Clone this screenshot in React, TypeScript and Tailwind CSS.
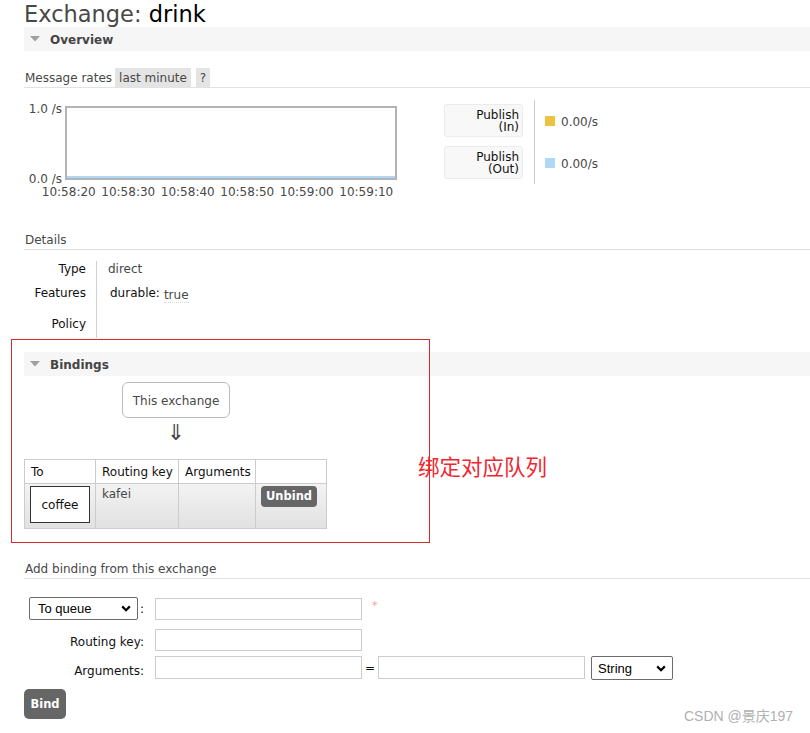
import React from "react";

function Tri() {
  return (
    <svg width="10" height="6" viewBox="0 0 10 6">
      <path d="M0 0H10L5 5.5Z" fill="#a0a0a0" />
    </svg>
  );
}

function SectionBar({ title, className = "" }: { title: string; className?: string }) {
  return (
    <div className={"h-[24px] bg-[#f6f6f6] flex items-center pl-[6px] " + className}>
      <Tri />
      <span className="ml-[10px] mt-[2px] font-bold text-[#444] leading-[14px]">{title}</span>
    </div>
  );
}

function Chevron() {
  return (
    <svg width="10" height="7" viewBox="0 0 10 7">
      <path d="M1.2 1.4L5 5.2L8.8 1.4" fill="none" stroke="#000" strokeWidth="2.2" />
    </svg>
  );
}

function LegendBox({ a, b }: { a: string; b: string }) {
  return (
    <div className="w-[79px] h-[33px] bg-[#f8f8f8] border border-[#ececec] rounded-[3px] flex flex-col justify-center items-end pr-[3px] pt-[1px] leading-[12px] text-[#111]">
      <span>{a}</span>
      <span>{b}</span>
    </div>
  );
}

const times = ["10:58:20", "10:58:30", "10:58:40", "10:58:50", "10:59:00", "10:59:10"];

export default function App() {
  return (
    <div className="relative w-[810px] h-[733px] overflow-hidden bg-white font-['DejaVu_Sans',Verdana,sans-serif] text-[12px] text-[#484848]">
      <div className="pl-[24px]">
        <h1 className="h-[27px] text-[22.5px] leading-[28px] text-[#484848] whitespace-nowrap font-normal">
          Exchange: <span className="text-black">drink</span>
        </h1>
        <SectionBar title="Overview" />

        <div className="mt-[17px] h-[20px] border-b border-[#e2e2e2] flex items-start">
          <span className="leading-[21px] pl-[1px] mr-[3px]">Message rates</span>
          <span className="h-[19px] leading-[21px] px-[4px] bg-[#e4e4e4]">last minute</span>
          <span className="ml-[5px] h-[19px] leading-[21px] px-[4px] bg-[#e4e4e4]">?</span>
        </div>

        <div className="mt-[10px] flex items-start">
          <div className="relative w-[376px] h-[105px]">
            <span className="absolute left-0 top-[4px] w-[38px] text-right leading-[14px]">1.0 /s</span>
            <span className="absolute left-0 top-[74px] w-[38px] text-right leading-[14px]">0.0 /s</span>
            <div className="absolute left-[41px] top-[8px] w-[332px] h-[74px] border-2 border-[#b4b4b4] bg-white">
              <div className="absolute left-0 right-0 bottom-0 h-[2px] bg-[#afd8f8]" />
            </div>
            <div className="absolute left-[15px] top-[87px] flex leading-[14px]">
              {times.map((t) => (
                <span key={t} className="w-[59.5px] text-center whitespace-nowrap">
                  {t}
                </span>
              ))}
            </div>
          </div>
          <div className="ml-[44px] mt-[2px] flex">
            <div className="pt-[4px] flex flex-col gap-[9px]">
              <LegendBox a="Publish" b="(In)" />
              <LegendBox a="Publish" b="(Out)" />
            </div>
            <div className="ml-[11px] h-[84px] border-l border-[#cccccc] pl-[10px] pt-[4px] flex flex-col gap-[9px]">
              <div className="h-[33px] flex items-center">
                <span className="w-[10px] h-[10px] bg-[#edc240]" />
                <span className="ml-[6px] mt-[2px]">0.00/s</span>
              </div>
              <div className="h-[33px] flex items-center">
                <span className="w-[10px] h-[10px] bg-[#afd8f8]" />
                <span className="ml-[6px] mt-[2px]">0.00/s</span>
              </div>
            </div>
          </div>
        </div>

        <div className="mt-[27px] h-[20px] border-b border-[#e2e2e2] leading-[21px] pl-[1px]">Details</div>

        <div className="mt-[11px] flex">
          <div className="w-[62px] text-right text-[#111] leading-[14px] pt-[1px]">
            <div className="h-[24px]">Type</div>
            <div className="h-[31px]">Features</div>
            <div className="h-[21px]">Policy</div>
          </div>
          <div className="ml-[10px] border-l border-[#d0d0d0] leading-[14px] pt-[1px]">
            <div className="h-[24px] pl-[11px]">direct</div>
            <div className="h-[31px] pl-[13px] flex items-start">
              <span className="text-[#111]">durable:</span>
              <span className="ml-[4px] mt-[2px] border-b border-dotted border-[#d8d8d8]">true</span>
            </div>
            <div className="h-[21px]" />
          </div>
        </div>

        <SectionBar title="Bindings" className="mt-[14px]" />

        <div className="mt-[6px] ml-[98px] w-[108px] h-[36px] border border-[#bbbbbb] rounded-[6px] flex items-center justify-center pt-[2px]">
          This exchange
        </div>
        <div className="ml-[98px] w-[108px] h-[41px] text-center text-[22px] leading-[30px] text-[#444]">⇓</div>

        <div className="w-[303px] border-t border-l border-[#cccccc]">
          <div className="flex h-[24px] text-[#111]">
            <div className="w-[71px] border-r border-b border-[#cccccc] pl-[6px] flex items-center">To</div>
            <div className="w-[83px] border-r border-b border-[#cccccc] pl-[6px] flex items-center">Routing key</div>
            <div className="w-[77px] border-r border-b border-[#cccccc] pl-[6px] flex items-center">Arguments</div>
            <div className="w-[71px] border-r border-b border-[#cccccc]" />
          </div>
          <div className="flex h-[45px] bg-linear-to-b from-[#f3f3f3] to-[#e1e1e1]">
            <div className="w-[71px] border-r border-b border-[#cccccc] pl-[5px] pt-[2px]">
              <div className="w-[60px] h-[37px] border border-[#333] bg-white flex items-center justify-center text-[#111]">
                coffee
              </div>
            </div>
            <div className="w-[83px] border-r border-b border-[#cccccc] pl-[6px] pt-[3px] leading-[14px]">kafei</div>
            <div className="w-[77px] border-r border-b border-[#cccccc]" />
            <div className="w-[71px] border-r border-b border-[#cccccc] pl-[5px] pt-[2px]">
              <div className="w-[56px] h-[21px] rounded-[4px] bg-[#666666] text-white font-bold text-[11.5px] flex items-center justify-center pt-[1px]">
                Unbind
              </div>
            </div>
          </div>
        </div>

        <div className="mt-[30px] h-[20px] border-b border-[#e2e2e2] leading-[21px] pl-[1px]">Add binding from this exchange</div>

        <div className="mt-[18px] flex items-center h-[23px]">
          <div className="w-[120px] flex items-center">
            <div className="ml-[5px] w-[109px] h-[23px] border border-[#6b6b6b] rounded-[2px] flex items-center justify-between pl-[8px] pr-[6px] font-['Liberation_Sans',Arial,sans-serif] text-[13px] text-black">
              <span className="mt-[1px]">To queue</span>
              <Chevron />
            </div>
            <span className="ml-[2px] text-[#111] mt-[1px]">:</span>
          </div>
          <div className="ml-[11px] w-[207px] h-[22px] border border-[#cccccc]" />
          <span className="ml-[10px] self-start mt-[1px] text-[#f39c9c] text-[11px]">*</span>
        </div>

        <div className="mt-[9px] flex items-center h-[22px]">
          <div className="w-[120px] text-right text-[#111] pt-[4px]">Routing key:</div>
          <div className="ml-[11px] w-[207px] h-[22px] border border-[#cccccc]" />
        </div>

        <div className="mt-[5px] flex items-start h-[24px]">
          <div className="w-[120px] text-right text-[#111] pt-[8px] leading-[14px]">Arguments:</div>
          <div className="ml-[11px] w-[207px] h-[23px] border border-[#cccccc]" />
          <span className="ml-[3px] pt-[5px] leading-[14px] text-[#111]">=</span>
          <div className="ml-[3px] w-[207px] h-[23px] border border-[#cccccc]" />
          <div className="ml-[6px] w-[82px] h-[24px] border border-[#6b6b6b] rounded-[2px] flex items-center justify-between pl-[6px] pr-[6px] font-['Liberation_Sans',Arial,sans-serif] text-[13px] text-black">
            <span className="mt-[1px]">String</span>
            <Chevron />
          </div>
        </div>

        <div className="mt-[9px] w-[42px] h-[30px] rounded-[5px] bg-[#666666] text-white font-bold text-[11.5px] flex items-center justify-center pt-[2px]">
          Bind
        </div>
      </div>

      <div className="absolute left-[11px] top-[339px] w-[419px] h-[204px] border border-[#d42b2b] pointer-events-none" />
      <div className="absolute left-[418px] top-[455px] text-[21.5px] leading-[22px] text-[#f0262f] font-['Noto_Sans_CJK_SC',sans-serif] whitespace-nowrap">
        绑定对应队列
      </div>
      <div className="absolute left-[684px] top-[708px] text-[14px] leading-[16px] text-[#b0b0b0] font-['Liberation_Sans','Noto_Sans_CJK_SC',sans-serif] whitespace-nowrap">
        CSDN @景庆197
      </div>
    </div>
  );
}
